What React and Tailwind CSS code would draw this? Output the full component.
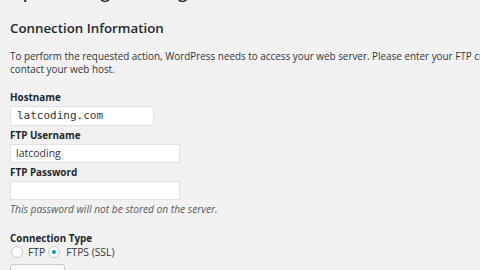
export default function App() {
  return (
    <div className="w-[480px] h-[270px] overflow-hidden bg-[#f1f1f1] text-[#32373c]" style={{ fontFamily: '"Open Sans", "Noto Sans", sans-serif' }}>
      <div className="px-[10px] w-[560px]">
        <div className="mt-[-18px] h-[20px] text-[17px] leading-[20px] font-semibold text-[#23282d] whitespace-nowrap">Update Plugin Settings</div>
        <h2 className="mt-[17px] text-[13.3px] leading-[18px] font-semibold text-[#23282d]">Connection Information</h2>
        <p className="mt-[13px] text-[9.9px] leading-[13px] whitespace-nowrap">
          To perform the requested action, WordPress needs to access your web server. Please enter your FTP credentials to proceed. If you do not remember your credentials, you should
          <br />
          contact your web host.
        </p>
        <div className="mt-[15px] text-[9.9px] leading-[12px] font-bold text-[#23282d]">Hostname</div>
        <div className="mt-[3px] w-[144px] h-[20px] bg-white border border-[#e2e2e2] flex items-center px-[6px] text-[11px] text-[#32373c]" style={{ fontFamily: '"DejaVu Sans Mono", monospace' }}>latcoding.com</div>
        <div className="mt-[3px] text-[9.9px] leading-[12px] font-bold text-[#23282d]">FTP Username</div>
        <div className="mt-[3px] w-[170px] h-[19px] bg-white border border-[#e2e2e2] flex items-center px-[5px] text-[10.5px] text-[#32373c]">latcoding</div>
        <div className="mt-[3px] text-[9.9px] leading-[12px] font-bold text-[#23282d]">FTP Password</div>
        <div className="mt-[3px] w-[170px] h-[19px] bg-white border border-[#e2e2e2]"></div>
        <div className="mt-[3px] text-[10.2px] leading-[13px] italic text-[#555d66]">This password will not be stored on the server.</div>
        <div className="mt-[16px] text-[9.9px] leading-[12px] font-bold text-[#23282d]">Connection Type</div>
        <div className="mt-[2px] flex items-center text-[10.3px] leading-[12px]">
          <span className="ml-[1px] w-[12px] h-[12px] rounded-full border border-[#c8c8c8] bg-white"></span>
          <span className="ml-[5px]">FTP</span>
          <span className="ml-[3px] w-[12px] h-[12px] rounded-full border border-[#c8c8c8] bg-white flex items-center justify-center">
            <span className="w-[4px] h-[4px] rounded-full bg-[#1e8cbe]"></span>
          </span>
          <span className="ml-[6px]">FTPS (SSL)</span>
        </div>
        <div className="mt-[6px] w-[55px] h-[20px] border border-[#cccccc] bg-[#f7f7f7] rounded-[2px]"></div>
      </div>
    </div>
  );
}
